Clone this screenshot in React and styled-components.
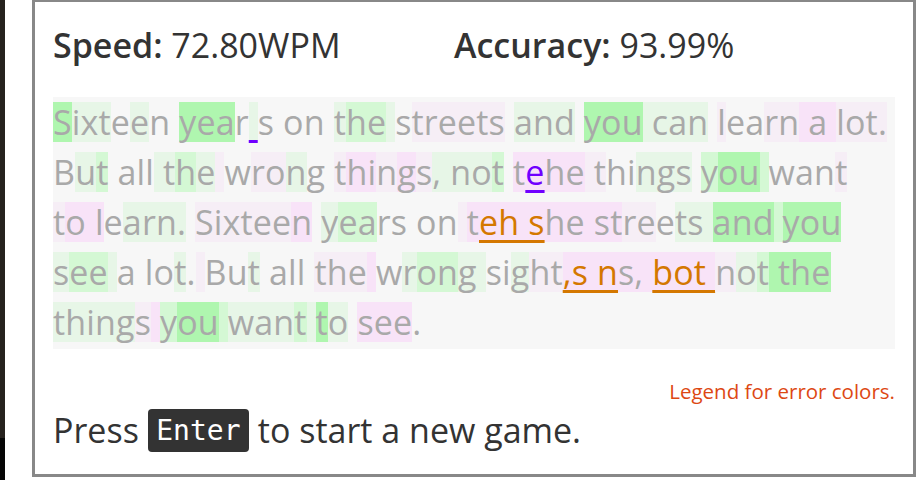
import React from 'react';
import styled, { createGlobalStyle } from 'styled-components';

const GlobalStyle = createGlobalStyle`
  html, body {
    margin: 0;
    padding: 0;
    background: #fff;
    overflow: hidden;
  }
  body {
    font-family: 'Open Sans', 'Noto Sans', sans-serif;
  }
`;

// background shades used for the per-character timing heatmap
const shades = {
  G: '#aff6af',
  M: '#d4f8d4',
  L: '#e7f6e7',
  P: '#f8e3f8',
  Q: '#f6eef6',
  '': 'transparent',
};

const marks = {
  cursor: '#7000ff',
  error: '#d47800',
};

// each line: [text, shade, mark]
const lines = [
  [
    ['S', 'G'], ['ixt', 'L'], ['e', ''], ['e', 'L'], ['n ', ''],
    ['yea', 'G'], ['r', ''], [' ', 'L', 'cursor'], ['s on ', ''],
    ['t', 'L'], ['he', 'M'], [' ', 'L'], ['s', ''], ['treets', 'Q'],
    [' ', ''], ['and', 'L'], [' ', ''], ['you', 'G'], [' can', 'L'],
    [' ', ''], ['l', 'Q'], ['ea', ''], ['rn', 'Q'], [' a ', 'P'], ['lot.', 'Q'],
  ],
  [
    ['B', ''], ['u', 'L'], ['t', 'M'], [' all', ''], [' t', 'L'], ['h', 'M'],
    ['e', 'L'], [' ', 'Q'], ['w', ''], ['ro', 'Q'], ['n', 'L'], ['g ', ''],
    ['t', 'Q'], ['hi', 'P'], ['n', 'Q'], ['g', 'P'], ['s', 'Q'], [', no', 'L'],
    ['t', 'M'], [' ', ''], ['t', 'P'], ['e', 'P', 'cursor'], ['he', 'P'],
    [' t', 'Q'], ['hi', ''], ['ngs', 'L'], [' ', ''], ['y', 'M'], ['ou', 'G'],
    [' ', 'M'], ['wan', ''], ['t', 'Q'],
  ],
  [
    ['t', 'Q'], ['o ', 'P'], ['l', 'P'], ['e', ''], ['arn.', 'L'], [' ', ''],
    ['Sixtee', 'Q'], ['n', 'P'], [' ', ''], ['y', 'L'], ['ea', 'M'],
    ['rs on', ''], [' ', 'Q'], ['t', 'P'], ['eh s', 'P', 'error'],
    ['he st', 'P'], ['re', 'Q'], ['e', ''], ['ts', 'L'], [' ', 'L'],
    ['and', 'G'], [' ', 'M'], ['you', 'G'],
  ],
  [
    ['s', 'L'], ['ee', 'M'], [' ', 'L'], ['a lo', ''], ['t', 'L'], ['.', ''],
    [' ', 'Q'], ['Bu', ''], ['t', 'L'], [' all ', ''], ['the', 'Q'], [' ', 'P'],
    ['w', ''], ['r', 'L'], ['on', 'M'], ['g', 'L'], [' ', 'L'], ['si', ''],
    ['g', 'L'], ['ht', 'Q'], [',s n', 'P', 'error'], ['s, ', 'P'],
    ['bot ', 'P', 'error'], ['n', 'Q'], ['o', 'L'], ['t', 'M'], [' the', 'G'],
  ],
  [
    ['thing', 'L'], ['s', 'Q'], [' ', 'P'], ['y', 'M'], ['ou', 'G'], [' ', 'M'],
    ['wan', 'L'], ['t', 'M'], [' ', 'L'], ['t', 'G'], ['o', 'L'], [' ', ''],
    ['see', 'P'], ['.', ''],
  ],
];

// --- styled components ---
const Screen = styled.div`
  display: flex;
  height: 480px;
  background: #fff;
`;

const EdgeStrip = styled.div`
  width: 5px;
  flex: none;
  background: linear-gradient(to bottom, #26221e 0 438px, #060606 438px);
`;

const Panel = styled.div`
  box-sizing: border-box;
  margin: -1px 0 0 27px;
  width: 884px;
  height: 478px;
  border: 3px solid #888;
  padding: 0 18px;
  display: flex;
  flex-direction: column;
  color: #333;
`;

const Stats = styled.div`
  display: flex;
  height: 95px;
  box-sizing: border-box;
  align-items: center;
  padding-bottom: 9px;
  font-size: 34px;
`;

const Stat = styled.div`
  width: 401px;
  flex: none;

  b {
    font-weight: 600;
  }
`;

const Passage = styled.div`
  background: #f7f7f7;
  padding-bottom: 2px;
  font-size: 34px;
  letter-spacing: 0.15px;
  color: #a9a9a9;
`;

const Line = styled.div`
  display: flex;
  align-items: center;
  height: 50px;
  white-space: pre;
`;

const Seg = styled.span`
  height: 40px;
  line-height: 40px;
  background: ${(p) => shades[p.$shade]};
  color: ${(p) => (p.$mark ? marks[p.$mark] : 'inherit')};
  text-decoration: ${(p) => (p.$mark ? 'underline' : 'none')};
  text-decoration-thickness: 3px;
  text-underline-offset: 5px;
`;

const Legend = styled.div`
  margin-top: 28px;
  text-align: right;
  font-size: 20.5px;
  color: #dd4814;
`;

const Prompt = styled.div`
  margin-top: 2px;
  display: flex;
  align-items: center;
  gap: 9px;
  font-size: 34px;
`;

const Key = styled.kbd`
  display: inline-flex;
  align-items: center;
  justify-content: center;
  box-sizing: border-box;
  width: 101px;
  height: 43px;
  border-radius: 4px;
  background: #333;
  color: #fff;
  font-family: 'DejaVu Sans Mono', 'Liberation Mono', monospace;
  font-size: 28px;
`;

export default function App() {
  return (
    <>
      <GlobalStyle />
      <Screen>
        <EdgeStrip />
        <Panel>
          <Stats>
            <Stat>
              <b>Speed:</b> 72.80WPM
            </Stat>
            <Stat>
              <b>Accuracy:</b> 93.99%
            </Stat>
          </Stats>
          <Passage>
            {lines.map((line, i) => (
              <Line key={i}>
                {line.map(([text, shade, mark], j) => (
                  <Seg key={j} $shade={shade} $mark={mark}>
                    {text}
                  </Seg>
                ))}
              </Line>
            ))}
          </Passage>
          <Legend>Legend for error colors.</Legend>
          <Prompt>
            Press <Key>Enter</Key> to start a new game.
          </Prompt>
        </Panel>
      </Screen>
    </>
  );
}
